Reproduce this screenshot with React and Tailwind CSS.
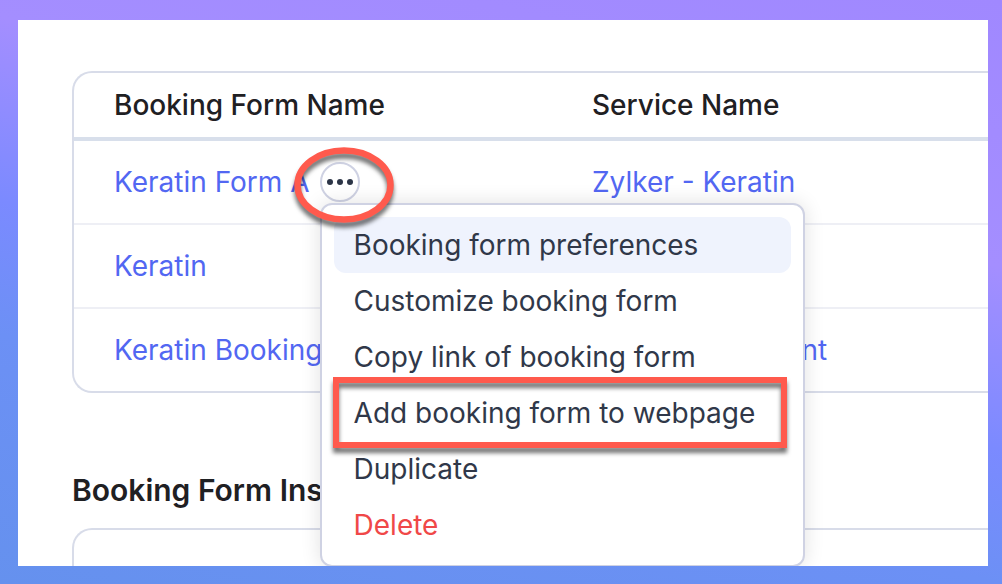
const forms = [
  { name: 'Keratin Form A', service: 'Zylker - Keratin', menuOpen: true },
  { name: 'Keratin', service: '' },
  { name: 'Keratin Booking', service: 'Keratin Treatment' },
]

const actions = [
  { label: 'Booking form preferences', active: true },
  { label: 'Customize booking form' },
  { label: 'Copy link of booking form' },
  { label: 'Add booking form to webpage', marked: true },
  { label: 'Duplicate' },
  { label: 'Delete', danger: true },
]

function ActionMenu() {
  return (
    <div
      role="menu"
      className="absolute left-0 top-full z-10 mt-px w-[485px] rounded-xl border-2 border-[#cfd2e3] bg-white p-3 shadow-[0_0_20px_rgba(0,0,0,0.12)]"
    >
      {actions.map(({ label, active, marked, danger }) => (
        <button
          key={label}
          role="menuitem"
          className={`relative block h-14 w-full rounded-xl px-5 text-left ${active ? 'bg-[#eff3fd]' : ''} ${danger ? 'text-[#f04848]' : 'text-[#303849]'}`}
        >
          {label}
          {marked && (
            <span className="pointer-events-none absolute -top-2 -bottom-[7px] -left-px right-1 border-6 border-[#ff5a4d] drop-shadow-[0_5px_2px_rgba(0,0,0,0.55)]" />
          )}
        </button>
      ))}
    </div>
  )
}

function MoreActions() {
  return (
    <div className="relative">
      <button
        aria-label="More actions"
        className="flex size-10 items-center justify-center gap-1 rounded-full border-2 border-[#cfd2e3] bg-white"
      >
        <span className="size-1.5 rounded-full bg-[#2c3547]" />
        <span className="size-1.5 rounded-full bg-[#2c3547]" />
        <span className="size-1.5 rounded-full bg-[#2c3547]" />
      </button>
      <ActionMenu />
      {/* Callout ring */}
      <svg
        viewBox="0 0 100 76"
        className="pointer-events-none absolute -top-4 -left-[26px] z-20 h-[76px] w-[100px] max-w-none overflow-visible drop-shadow-[0_5px_2px_rgba(0,0,0,0.55)]"
      >
        <ellipse cx="50" cy="39" rx="46.5" ry="34.5" fill="none" stroke="#ff5a4d" strokeWidth="6.5" />
      </svg>
    </div>
  )
}

export default function App() {
  return (
    <div className="bg-[linear-gradient(194deg,#a088ff_0%,#a48eff_32%,#7b8aff_54%,#6c90f5_70%,#6591ee_100%)] pt-5 pr-3.5 pb-[18px] pl-[18px] font-['Inter',sans-serif] text-[28px] leading-9">
      <main className="overflow-hidden bg-white pt-[51px] pl-[54px]">
        <div className="rounded-l-[20px] border-2 border-r-0 border-[#d8dce9]">
          <table className="w-full table-fixed border-separate border-spacing-0 text-left">
            <thead>
              <tr className="text-[#1f2023]">
                <th className="h-[68px] w-[478px] border-b-4 border-[#d8dfeb] pl-10 font-medium">Booking Form Name</th>
                <th className="border-b-4 border-[#d8dfeb] pl-10 font-medium">Service Name</th>
              </tr>
            </thead>
            <tbody className="[&>tr:last-child>td]:h-[82px] [&>tr:last-child>td]:border-b-0">
              {forms.map(({ name, service, menuOpen }) => (
                <tr key={name}>
                  <td className="h-[84px] border-b-2 border-[#eeeff5] py-0 pl-10">
                    <div className="flex items-center gap-2.5">
                      <a href="#" className="whitespace-nowrap text-[#5267f2]">{name}</a>
                      {menuOpen && <MoreActions />}
                    </div>
                  </td>
                  <td className="border-b-2 border-[#eeeff5] py-0 pl-10">
                    {service && <a href="#" className="text-[#5267f2]">{service}</a>}
                  </td>
                </tr>
              ))}
            </tbody>
          </table>
        </div>
        <h2 className="mt-[79px] text-[30px] font-semibold text-[#1f2023]">Booking Form Insights</h2>
        <div className="mt-5 h-[38px] rounded-tl-[20px] border-t-2 border-l-2 border-[#d8dce9]" />
      </main>
    </div>
  )
}
